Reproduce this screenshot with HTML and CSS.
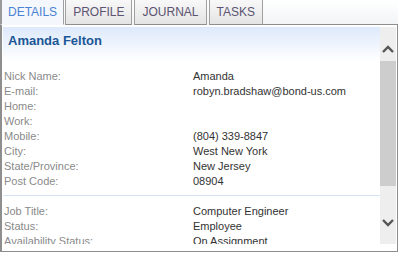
FILE: index.html
```html
<!DOCTYPE html>
<html>
  <head>
    <meta charset="utf-8">
    <title>Contact Details</title>
    <link rel="stylesheet" href="styles.css">
  </head>
  <body>
  <div class="card">
    <ul class="tabs">
      <li class="tab active">DETAILS</li>
      <li class="tab">PROFILE</li>
      <li class="tab">JOURNAL</li>
      <li class="tab">TASKS</li>
    </ul>
    <div class="panel">
      <div class="view">
        <div class="content">
          <h1 class="name">Amanda Felton</h1>
          <dl class="fields">
            <dt>Nick Name:</dt><dd>Amanda</dd>
            <dt>E-mail:</dt><dd>robyn.bradshaw@bond-us.com</dd>
            <dt>Home:</dt><dd></dd>
            <dt>Work:</dt><dd></dd>
            <dt>Mobile:</dt><dd>(804) 339-8847</dd>
            <dt>City:</dt><dd>West New York</dd>
            <dt>State/Province:</dt><dd>New Jersey</dd>
            <dt>Post Code:</dt><dd>08904</dd>
          </dl>
          <dl class="fields second">
            <dt>Job Title:</dt><dd>Computer Engineer</dd>
            <dt>Status:</dt><dd>Employee</dd>
            <dt>Availability Status:</dt><dd>On Assignment</dd>
          </dl>
        </div>
        <div class="scrollbar">
          <div class="arrow up">
            <svg width="12" height="8" viewBox="0 0 12 8"><path d="M1 7 L6 2 L11 7" fill="none" stroke="#555" stroke-width="2.4"/></svg>
          </div>
          <div class="track"><div class="thumb"></div></div>
          <div class="arrow down">
            <svg width="12" height="8" viewBox="0 0 12 8"><path d="M1 1 L6 6 L11 1" fill="none" stroke="#555" stroke-width="2.4"/></svg>
          </div>
        </div>
      </div>
    </div>
  </div>
  </body>
</html>
```

FILE: styles.css
```css
* {
  box-sizing: border-box;
  margin: 0;
  padding: 0;
}

body {
  font-family: "Liberation Sans", Arial, sans-serif;
  font-size: 11px;
  background: #fff;
  width: 399px;
  height: 253px;
  overflow: hidden;
}

.card {
  width: 398px;
  height: 252px;
  display: flex;
  flex-direction: column;
  background: linear-gradient(#ffffff, #f0f3f5 60%, #eef1f4);
}

.tabs {
  display: flex;
  list-style: none;
  height: 25px;
  flex-shrink: 0;
  background: linear-gradient(#ffffff, #f1f4f6);
}

.tab {
  height: 25px;
  padding: 0 7px;
  margin-right: 2px;
  font-size: 12px;
  line-height: 24px;
  color: #5c5470;
  border: 1px solid #a0a0a0;
  border-top: none;
  border-bottom: 1px solid #8e8e8e;
  background: linear-gradient(#f8f8f8, #e4e4e4);
}

.tab.active {
  color: #4a82d4;
  background: #f4f7fb;
  border-bottom-color: #f4f7fb;
  margin-right: 1px;
  border-left: 2px solid #9a9a9a;
  padding: 0 6px;
}

.tabs .tab:last-child {
  margin-right: 0;
}

.tabs::after {
  content: "";
  flex: 1;
  border-bottom: 1px solid #8e8e8e;
}

.panel {
  flex: 1;
  min-height: 0;
  border: 1px solid #8e8e8e;
  border-left-width: 2px;
  border-top: none;
  background: #fff;
  padding: 2px 0 7px 1px;
}

.view {
  display: flex;
  height: 100%;
}

.content {
  flex: 1;
  overflow: hidden;
}

.name {
  height: 34px;
  padding: 6px 0 0 5px;
  font-size: 13px;
  font-weight: bold;
  color: #1b5796;
  background: linear-gradient(#dde9fb, #ffffff);
}

.fields {
  display: grid;
  grid-template-columns: 189px 1fr;
  grid-auto-rows: 15px;
  line-height: 15px;
  padding: 8px 0 6px 1px;
}

.fields dt {
  color: #8a8a8a;
}

.fields dd {
  color: #333;
}

.second {
  border-top: 1px solid #d5e5f8;
  padding-top: 8px;
}

.scrollbar {
  width: 16px;
  margin-right: 1px;
  display: flex;
  flex-direction: column;
  background: #eeeeee;
}

.arrow {
  display: flex;
  justify-content: center;
}

.up {
  height: 34px;
  align-items: flex-end;
  padding-bottom: 8px;
}

.down {
  height: 34px;
  align-items: flex-start;
  padding-top: 9px;
}

.track {
  flex: 1;
}

.thumb {
  height: 125px;
  background: #cdcdcd;
}
```
